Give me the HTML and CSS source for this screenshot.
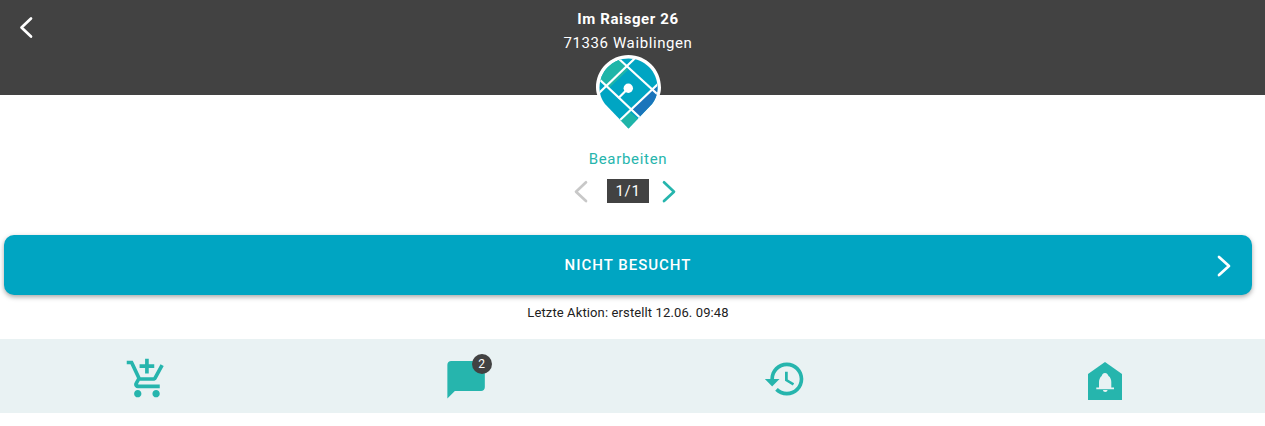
FILE: index.html
```html
<!DOCTYPE html>
<html lang="de">
<head>
    <meta charset="UTF-8">
    <meta name="viewport" content="width=device-width, initial-scale=1.0">
    <title>Im Raisger 26</title>
    <link rel="stylesheet" href="styles.css">
</head>
<body>
    <!-- Address header -->
    <header class="top-bar">
        <a href="#" class="back-link">
            <svg width="56" height="54" viewBox="0 0 56 54"><path class="chevron-white" d="M31 18.500L21.500 27.500L31 36.500"/></svg>
        </a>
        <div class="address">
            <div class="street">Im Raisger 26</div>
            <div class="city">71336 Waiblingen</div>
        </div>
    </header>

    <main class="content">
        <!-- Map pin logo -->
        <svg class="pin" width="65" height="75" viewBox="0 0 65 75">
            <defs>
                <clipPath id="pin-inner">
                    <path d="M32.500 3.500C48.500 3.500 61.500 16.500 61.500 32.500C61.500 38 60 44 56 49L32.500 73.500L9 49C5 44 3.500 38 3.500 32.500C3.500 16.500 16.500 3.500 32.500 3.500Z"/>
                </clipPath>
            </defs>
            <path fill="#fff" d="M32.500 0C50.500 0 65 14.500 65 32.500C65 45 56 53 32.500 75C9 53 0 45 0 32.500C0 14.500 14.500 0 32.500 0Z"/>
            <g clip-path="url(#pin-inner)">
                <rect width="65" height="75" fill="#00a5c3"/>
                <polygon fill="#1fb5a8" points="23.300,4.300 0,4.300 0,24.300 3.300,24.300 13,33 32,15"/>
                <polygon fill="#1a75bb" points="63.300,27.700 36,54 47.300,65.700 65,65"/>
                <polygon fill="#1fb5a8" points="32.500,56 20,68 32.500,75 47,68"/>
                <g class="roads">
                    <path d="M23.300 4.300L62.300 40"/>
                    <path d="M40 2.300L3.300 37.700"/>
                    <path d="M3.300 24.300L47.300 65.700"/>
                    <path d="M63.300 27.700L23.300 65.700"/>
                    <path d="M32.300 33.300L22.300 43.300"/>
                </g>
                <circle cx="32.300" cy="33.300" r="4.700" fill="#fff"/>
            </g>
        </svg>

        <a href="#" class="edit-link">Bearbeiten</a>

        <div class="pager">
            <svg width="20" height="24" viewBox="0 0 20 24"><path class="chevron-grey" d="M12 3.300L2 12.700L12 22"/></svg>
            <span class="pager-count">1/1</span>
            <svg width="20" height="24" viewBox="0 0 20 24"><path class="chevron-teal" d="M2 3.300L12 12.700L2 22"/></svg>
        </div>

        <button class="status-button">
            <span>NICHT BESUCHT</span>
            <svg class="status-arrow" width="14" height="22" viewBox="0 0 14 22"><path class="chevron-white" d="M2 2L12 11L2 20"/></svg>
        </button>

        <p class="last-action">Letzte Aktion: erstellt 12.06. 09:48</p>
    </main>

    <!-- Bottom actions -->
    <nav class="action-bar">
        <a href="#" class="action">
            <svg width="44" height="44" viewBox="-0.500 0 24 24"><path d="M11 9h2V6h3V4h-3V1h-2v3H8v2h3v3zm-4 9c-1.100 0-1.990.9-1.990 2S5.900 22 7 22s2-.9 2-2-.9-2-2-2zm10 0c-1.100 0-1.990.9-1.990 2s.89 2 1.990 2 2-.9 2-2-.9-2-2-2zm-9.830-3.250l.03-.12.9-1.630h7.450c.75 0 1.410-.41 1.750-1.030l3.860-7.010L19.420 4h-.01l-1.100 2-2.760 5H8.530l-.13-.27L6.160 6l-.95-2-.94-2H1v2h2l3.600 7.590-1.350 2.450c-.16.28-.25.61-.25.96 0 1.100.9 2 2 2h12v-2H7.420c-.13 0-.25-.11-.25-.25z"/></svg>
        </a>
        <a href="#" class="action">
            <svg width="44" height="44" viewBox="0.200 -0.200 23.500 23.500"><path d="M20 2H4c-1.100 0-2 .9-2 2v18l4-4h14c1.100 0 2-.9 2-2V4c0-1.100-.9-2-2-2z"/></svg>
            <span class="badge">2</span>
        </a>
        <a href="#" class="action">
            <svg width="44" height="44" viewBox="0 0 24 24"><path d="M13 3c-4.970 0-9 4.030-9 9H1l3.890 3.890.07.14L9 12H6c0-3.870 3.130-7 7-7s7 3.130 7 7-3.130 7-7 7c-1.930 0-3.680-.79-4.940-2.060l-1.420 1.420C8.270 19.990 10.510 21 13 21c4.970 0 9-4.030 9-9s-4.030-9-9-9zm-1 5v5l4.280 2.540.72-1.210-3.500-2.080V8H12z"/></svg>
        </a>
        <a href="#" class="action">
            <svg width="44" height="44" viewBox="-5 -5 44 44">
                <path d="M17 0L34 12V38H0V12Z"/>
                <path class="bell" d="M17 11C19 11 20 12.500 20.500 14C22.500 15 23.300 18 23.300 20V25.500H26V27.300H8.300V25.500H11V20C11 18 12 15 13.700 14C14 12.500 15 11 17 11Z"/>
                <path class="bell" d="M15 28H19.500C19.500 29 18.500 30 17.200 30C16 30 15 29 15 28Z"/>
            </svg>
        </a>
    </nav>
</body>
</html>
```

FILE: styles.css
```css
/* General Styles */
body {
    font-family: 'Roboto', 'Liberation Sans', sans-serif;
    background-color: white;
    margin: 0;
    padding: 0;
    color: #212121;
}

a {
    color: #26b5ad;
    text-decoration: none;
}

svg {
    display: block;
}

/* Header */
.top-bar {
    display: grid;
    grid-template-columns: 56px 1fr 56px;
    height: 95px;
    padding-right: 9px;
    background-color: #424242;
    color: white;
}

.address {
    padding-top: 7px;
    text-align: center;
    font-size: 15px;
    line-height: 24px;
    letter-spacing: 0.6px;
}

.street {
    font-weight: 700;
}

.chevron-white, .chevron-grey, .chevron-teal {
    fill: none;
    stroke-width: 2.7;
    stroke-linecap: round;
    stroke-linejoin: round;
}

.chevron-white {
    stroke: white;
}

.chevron-grey {
    stroke: #c8c8c8;
}

.chevron-teal {
    stroke: #26b5ad;
}

/* Main */
.content {
    display: flex;
    flex-direction: column;
    align-items: center;
    padding: 0 13px 0 4px;
}

.pin {
    margin-top: -40px;
}

.roads path {
    fill: none;
    stroke: white;
    stroke-width: 2.2;
}

.edit-link {
    margin-top: 20px;
    font-size: 15px;
    line-height: 18px;
    letter-spacing: 0.7px;
}

.pager {
    display: flex;
    align-items: center;
    gap: 13px;
    margin-top: 11px;
}

.pager-count {
    width: 42px;
    height: 24px;
    background-color: #424242;
    color: white;
    font-size: 15px;
    line-height: 24px;
    text-align: center;
    letter-spacing: 0.6px;
}

.status-button {
    position: relative;
    width: 100%;
    height: 60px;
    margin-top: 32px;
    padding: 0;
    border: none;
    border-radius: 10px;
    background-color: #00a5c2;
    box-shadow: 0 2px 5px rgba(0, 0, 0, 0.35);
    color: white;
    font-family: inherit;
    font-size: 15px;
    font-weight: 500;
    letter-spacing: 1px;
    cursor: pointer;
}

.status-arrow {
    position: absolute;
    top: 20px;
    right: 21px;
}

.last-action {
    margin: 9px 0 0;
    font-size: 13px;
    line-height: 18px;
    letter-spacing: 0.12px;
}

/* Bottom actions */
.action-bar {
    display: flex;
    justify-content: space-between;
    align-items: flex-start;
    height: 56px;
    margin-top: 17px;
    padding: 18px 138px 0 124px;
    background-color: #e9f2f3;
}

.action {
    position: relative;
    display: block;
    width: 44px;
    height: 44px;
    fill: #26b5ad;
}

.bell {
    fill: #e9f2f3;
}

.badge {
    position: absolute;
    top: -3px;
    left: 28px;
    width: 20px;
    height: 20px;
    border-radius: 50%;
    background-color: #424242;
    color: white;
    font-size: 12px;
    line-height: 20px;
    text-align: center;
}
```
